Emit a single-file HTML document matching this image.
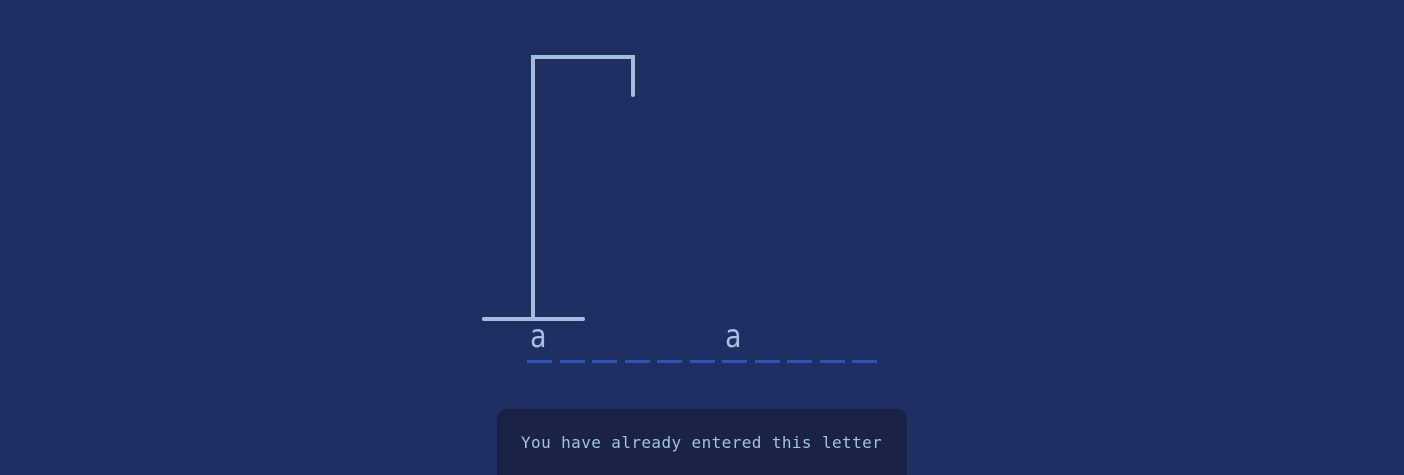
<!DOCTYPE html>
<html><head><meta charset="utf-8"><style>
html,body{margin:0;padding:0;width:1404px;height:475px;overflow:hidden;background:#1f2f63;position:relative;}
svg{position:absolute;left:0;top:0}
.l{position:absolute;font-family:"DejaVu Sans Mono","Liberation Mono",monospace;font-size:32px;color:#a3c0de;line-height:1;transform:scaleX(0.85);transform-origin:left top;}
.toast{position:absolute;left:497px;top:409px;width:410px;height:66px;background:#1a2245;border-radius:10px 10px 0 0;}
.toast span{position:absolute;left:24px;top:24px;font-family:"DejaVu Sans Mono","Liberation Mono",monospace;font-size:16px;letter-spacing:0.4px;color:#9cc4e6;white-space:nowrap;}
</style></head><body>
<svg width="1404" height="475">
<g stroke="#a2bedb" stroke-width="4" stroke-linecap="round" fill="none">
<polyline points="533,319 533,57 633,57 633,95"/>
<line x1="484" y1="319" x2="583" y2="319"/>
</g>
<g stroke="#2b55b0" stroke-width="3">
<line x1="527" y1="361.5" x2="552" y2="361.5"/>
<line x1="560" y1="361.5" x2="585" y2="361.5"/>
<line x1="592" y1="361.5" x2="617" y2="361.5"/>
<line x1="625" y1="361.5" x2="650" y2="361.5"/>
<line x1="657" y1="361.5" x2="682" y2="361.5"/>
<line x1="690" y1="361.5" x2="715" y2="361.5"/>
<line x1="722" y1="361.5" x2="747" y2="361.5"/>
<line x1="755" y1="361.5" x2="780" y2="361.5"/>
<line x1="787" y1="361.5" x2="812" y2="361.5"/>
<line x1="820" y1="361.5" x2="845" y2="361.5"/>
<line x1="852" y1="361.5" x2="877" y2="361.5"/>
</g>
</svg>
<div class="l" style="left:530px;top:320px">a</div>
<div class="l" style="left:725px;top:320px">a</div>
<div class="toast"><span>You have already entered this letter</span></div>
</body></html>
